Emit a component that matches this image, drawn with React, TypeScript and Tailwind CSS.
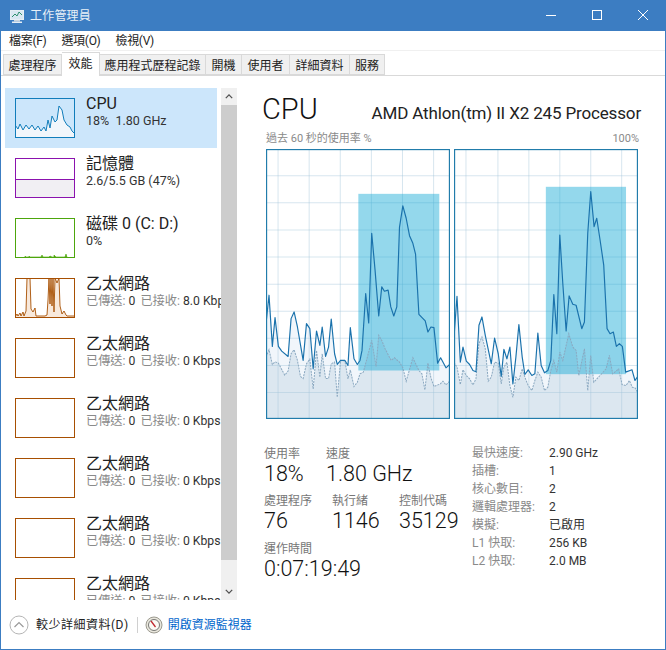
import React from "react";

const s1 = "19,550 28,465 38,618 46,532 56,618 66,632 85,648 94,535 103,515 113,560 130,660 140,550 150,565 160,685 170,572 180,615 187,560 197,648 206,620 214,536 224,640 232,672 242,660 255,660 264,675 271,562 282,655 292,672 300,660 306,630 317,460 326,548 335,280 345,390 356,527 365,440 373,453 384,450 392,500 401,527 410,500 418,262 428,198 438,235 448,287 458,310 466,342 476,522 495,542 503,575 512,560 521,562 532,668 541,652 557,682 568,672";
const d1 = "19,650 28,628 38,672 46,664 56,668 75,704 85,692 94,640 103,628 113,660 122,708 130,714 140,670 150,656 160,745 170,630 180,710 187,640 197,714 206,714 214,670 224,665 232,770 242,660 255,662 264,715 271,688 282,738 292,725 300,700 310,695 335,600 348,678 356,585 365,600 375,625 393,660 403,652 418,665 428,682 438,722 458,652 476,690 485,700 494,748 503,668 512,712 521,738 540,730 548,722 557,733 568,722";
const s2 = "13,590 22,468 32,665 40,620 50,662 60,672 70,690 79,694 88,555 97,530 107,585 125,670 135,593 146,640 155,708 163,627 172,655 181,620 190,730 199,650 208,553 218,650 226,702 236,688 247,705 256,700 265,578 275,675 285,697 295,690 304,660 313,463 322,580 331,285 340,430 350,572 359,467 370,492 380,495 397,565 405,545 415,280 424,155 434,260 442,235 452,300 463,375 473,565 482,580 492,575 501,618 510,610 519,618 529,695 548,688 557,720 565,708";
const d2 = "13,665 22,680 32,732 40,688 50,705 60,715 70,733 79,715 88,610 97,590 107,625 116,722 125,710 135,665 146,668 155,730 163,680 172,665 181,735 190,770 199,710 208,720 218,685 226,710 236,735 247,750 256,720 265,695 275,710 285,750 295,740 304,690 313,660 322,695 331,635 340,660 358,580 370,620 380,630 388,705 405,625 415,750 424,645 433,725 452,705 470,685 480,645 490,700 508,685 518,732 530,735 540,720 549,740 557,742 565,755";

function Chart({ left, right, vs, solid, dash, rect, cls }: { left: number; right: number; vs: number[]; solid: string; dash: string; rect: number[]; cls: string }) {
  const hs = [108, 189, 270, 351, 432, 513, 594, 675, 756];
  const top = 28, bottom = 835;
  return (
    <svg viewBox={`${left} ${top} ${right - left} ${bottom - top}`} preserveAspectRatio="none" className={cls}>
      <rect x={left} y={top} width={right - left} height={bottom - top} fill="#fff" />
      <polygon points={`${left},${bottom} ${solid} ${right},${bottom}`} fill="#f1f6fb" />
      <polygon points={`${left},${bottom} ${dash} ${right},${bottom}`} fill="#dce7f0" />
      {vs.map((x) => (
        <line key={x} x1={x} x2={x} y1={top} y2={bottom} stroke="#9fc3d9" strokeOpacity="0.42" strokeWidth="3" />
      ))}
      {hs.map((y) => (
        <line key={y} x1={left} x2={right} y1={y} y2={y} stroke="#9fc3d9" strokeOpacity="0.42" strokeWidth="3" />
      ))}
      <rect x={rect[0]} y={rect[1]} width={rect[2] - rect[0]} height={rect[3] - rect[1]} fill="#12a8d4" fillOpacity="0.45" />
      <polyline points={dash} fill="none" stroke="#8aa8c0" strokeWidth="3" strokeDasharray="6 3" />
      <polyline points={solid} fill="none" stroke="#1a72ac" strokeWidth="3.5" strokeLinejoin="round" />
      <rect x={left + 1.5} y={top + 1.5} width={right - left - 3} height={bottom - top - 3} fill="none" stroke="#217cab" strokeWidth="4" />
    </svg>
  );
}

function MiniCpu() {
  const pts = "0,27 3,31 5,26 8,32 11,27 14,31 17,27 20,32 23,28 26,33 29,29 31,33 33,22 35,30 37,18 40,24 42,22 44,8 47,12 49,22 52,27 55,29 57,33 60,36";
  return (
    <svg viewBox="0 0 60 40" className="w-[60px] h-[40px] shrink-0">
      <polygon points={`0,40 ${pts} 60,40`} fill="#f1f6fb" />
      <polyline points={pts} fill="none" stroke="#117dbb" strokeWidth="1" />
      <rect x=".5" y=".5" width="59" height="39" fill="none" stroke="#117dbb" />
    </svg>
  );
}
function MiniMem() {
  return (
    <svg viewBox="0 0 60 40" className="w-[60px] h-[40px] shrink-0">
      <rect x="0" y="21" width="60" height="19" fill="#f1eff3" />
      <line x1="0" x2="60" y1="21.5" y2="21.5" stroke="#8b12ae" />
      <rect x=".5" y=".5" width="59" height="39" fill="none" stroke="#8b12ae" />
    </svg>
  );
}
function MiniDisk() {
  return (
    <svg viewBox="0 0 60 40" className="w-[60px] h-[40px] shrink-0">
      <polyline points="10,39 10,38 11,39 14,39 14,38 15,39 26,39 27,37 28,39 34,39 35,38 37,39 39,39 39,37 40,38 41,39 50,39 51,36 52,39" fill="#4da60c" stroke="#4da60c" strokeWidth=".6" />
      <rect x=".5" y=".5" width="59" height="39" fill="none" stroke="#4da60c" />
    </svg>
  );
}
function MiniNet({ active }: { active?: boolean }) {
  const pts = "0,39 2,36 3,38 5,35 6,38 8,34 9,38 11,33 12,0 13,0 15,0 16,31 18,34 20,30 21,38 23,38 30,38 32,37 33,22 34,0 35,26 36,0 37,28 38,0 39,34 40,0 42,5 44,0 45,28 47,36 49,33 51,37 52,38 60,38";
  return (
    <svg viewBox="0 0 60 40" className="w-[60px] h-[40px] shrink-0">
      {active && <polygon points={`0,40 ${pts} 60,40`} fill="#f8e9dc" />}
      {active && <polyline points={pts} fill="none" stroke="#a74f01" strokeWidth=".9" />}
      <rect x=".5" y=".5" width="59" height="39" fill="none" stroke="#a74f01" />
    </svg>
  );
}

function NetSub({ v }: { v: string }) {
  return (
    <div className="text-[12.2px] leading-[16px] whitespace-nowrap text-[#333]">
      <span className="text-[#8a8a8a]">已傳送:</span> 0 <span className="text-[#8a8a8a] ml-[2px]">已接收:</span> {v}
    </div>
  );
}

function Item({ icon, title, sub, selected }: { icon: React.ReactNode; title: string; sub: React.ReactNode; selected?: boolean }) {
  return (
    <div className={`w-[212px] h-[60px] shrink-0 flex items-center gap-[11px] pl-[10px] ${selected ? "bg-[#cce6fb]" : ""}`}>
      {icon}
      <div className="pb-[13px] whitespace-nowrap">
        <div className="text-[16px] leading-[19px] text-[#222]">{title}</div>
        {sub}
      </div>
    </div>
  );
}

function Stat({ label, value, cls }: { label: string; value: string; cls: string }) {
  return (
    <div className={cls}>
      <div className="text-[12px] leading-[15px] text-[#777]">{label}</div>
      <div className="text-[21.5px] leading-[24px] font-light text-[#111]">{value}</div>
    </div>
  );
}

const Sub = ({ t }: { t: string }) => <div className="text-[12.5px] leading-[16px] text-[#333] whitespace-pre">{t}</div>;

const specs = [
  ["最快速度:", "2.90 GHz"],
  ["插槽:", "1"],
  ["核心數目:", "2"],
  ["邏輯處理器:", "2"],
  ["模擬:", "已啟用"],
  ["L1 快取:", "256 KB"],
  ["L2 快取:", "2.0 MB"],
];

const tabs = [
  ["處理程序", "w-[59px]"],
  ["應用程式歷程記錄", "w-[106px]"],
  ["開機", "w-[36px]"],
  ["使用者", "w-[48px]"],
  ["詳細資料", "w-[60px]"],
  ["服務", "w-[35px]"],
];

function Tab({ t, w }: { t: string; w: string }) {
  return (
    <div className={`${w} h-[21px] bg-[#f0f0f0] border border-[#d9d9d9] border-l-0 flex items-center justify-center pt-[3px] text-[12px] text-[#222] whitespace-nowrap`}>{t}</div>
  );
}

export default function App() {
  return (
    <div
      className="w-[666px] h-[650px] flex flex-col overflow-hidden bg-white border-x border-b border-[#3c7dc2] text-[#222]"
      style={{ fontFamily: 'Roboto,"Noto Sans CJK TC",sans-serif' }}
    >
      {/* title bar */}
      <div className="h-[31px] shrink-0 -mx-px bg-[#3c7dc2] flex items-center pl-[9px] text-white">
        <svg viewBox="0 0 16 16" className="w-[16px] h-[16px]">
          <rect x="1.5" y="2.5" width="13" height="9" fill="#d9e7f2" stroke="#e6eef5" />
          <polyline points="3,9 6,6 8,8 10,4 13,7" fill="none" stroke="#2f8f6f" strokeWidth="1" />
          <rect x="5" y="12" width="6" height="1.5" fill="#c9d5df" />
          <rect x="3" y="13.5" width="10" height="1.5" fill="#e6eef5" />
        </svg>
        <span className="ml-[5px] pt-[1px] text-[12px] tracking-[0.2px] text-[#e8f0f8]">工作管理員</span>
        <div className="ml-auto flex items-center">
          <svg viewBox="0 0 46 31" className="w-[46px] h-[31px]"><line x1="18" x2="28" y1="15.5" y2="15.5" stroke="#fff" /></svg>
          <svg viewBox="0 0 46 31" className="w-[46px] h-[31px]"><rect x="18.5" y="10.5" width="9" height="9" fill="none" stroke="#fff" /></svg>
          <svg viewBox="0 0 46 31" className="w-[46px] h-[31px]"><path d="M18 10 L28 20 M28 10 L18 20" stroke="#fff" fill="none" /></svg>
        </div>
      </div>

      {/* menu */}
      <div className="h-[20px] shrink-0 flex items-center pl-[8px] gap-[15px] text-[12px] tracking-[-0.3px] border-b border-[#f0f0f0] text-[#222]">
        <span>檔案(F)</span>
        <span>選項(O)</span>
        <span>檢視(V)</span>
      </div>

      {/* tabs */}
      <div className="h-[25px] shrink-0 flex items-end pl-[2px] border-b border-[#d9d9d9]">
        <Tab t={tabs[0][0]} w={`${tabs[0][1]} border-l!`} />
        <div className="relative w-[38px] h-[24px] bg-white border border-[#d9d9d9] border-l-0 border-b-0 flex items-center justify-center text-[12px] -mb-px pb-[1px]">效能</div>
        {tabs.slice(1).map(([t, w]) => (
          <Tab key={t} t={t} w={w} />
        ))}
      </div>

      {/* content */}
      <div className="flex-1 flex min-h-0">
        {/* sidebar */}
        <div className="w-[236px] shrink-0 flex pt-[12px] pl-[4px] h-[524px]">
          <div className="w-[216px] overflow-hidden flex flex-col">
            <Item selected icon={<MiniCpu />} title="CPU" sub={<Sub t="18%  1.80 GHz" />} />
            <Item icon={<MiniMem />} title="記憶體" sub={<Sub t="2.6/5.5 GB (47%)" />} />
            <Item icon={<MiniDisk />} title="磁碟 0 (C: D:)" sub={<Sub t="0%" />} />
            <Item icon={<MiniNet active />} title="乙太網路" sub={<NetSub v="8.0 Kbps" />} />
            <Item icon={<MiniNet />} title="乙太網路" sub={<NetSub v="0 Kbps" />} />
            <Item icon={<MiniNet />} title="乙太網路" sub={<NetSub v="0 Kbps" />} />
            <Item icon={<MiniNet />} title="乙太網路" sub={<NetSub v="0 Kbps" />} />
            <Item icon={<MiniNet />} title="乙太網路" sub={<NetSub v="0 Kbps" />} />
            <Item icon={<MiniNet />} title="乙太網路" sub={<NetSub v="0 Kbps" />} />
          </div>
          <div className="w-[16px] bg-[#f0f0f0] flex flex-col shrink-0">
            <div className="h-[17px] flex items-center justify-center">
              <svg viewBox="0 0 10 6" className="w-[8px] h-[5px]"><path d="M1 5 L5 1 L9 5" fill="none" stroke="#505050" strokeWidth="1.6" /></svg>
            </div>
            <div className="h-[455px] bg-[#cdcdcd]" />
            <div className="flex-1 flex items-end justify-center pb-[6px]">
              <svg viewBox="0 0 10 6" className="w-[8px] h-[5px]"><path d="M1 1 L5 5 L9 1" fill="none" stroke="#505050" strokeWidth="1.6" /></svg>
            </div>
          </div>
        </div>

        {/* main */}
        <div className="flex-1 min-w-0 pl-[26px] pt-[12px]">
          <div className="w-[378px] flex items-end justify-between h-[38px]">
            <span className="text-[29px] leading-[34px] font-light text-[#111] -ml-px">CPU</span>
            <span className="text-[17px] tracking-[-0.15px] leading-[24px] pb-[1px] whitespace-nowrap text-[#222]">AMD Athlon(tm) II X2 245 Processor</span>
          </div>
          <div className="w-[373px] ml-[3px] flex justify-between text-[11px] leading-[15px] mt-[5px] text-[#8a8a8a]">
            <span>過去 60 秒的使用率 %</span>
            <span>100%</span>
          </div>
          <div className="flex ml-[3px] gap-[4px] mt-[3px]">
            <Chart cls="w-[184px] h-[270px] block" left={19} right={569} vs={[55, 148, 241, 334, 427, 520]} solid={s1} dash={d1} rect={[295, 162, 537, 690]} />
            <Chart cls="w-[184px] h-[270px] block" left={13} right={566} vs={[49, 145, 238, 331, 424, 517]} solid={s2} dash={d2} rect={[289, 141, 530, 701]} />
          </div>
          <div className="flex mt-[28px] ml-[1px]">
            <div className="w-[208px]">
              <div className="flex">
                <Stat label="使用率" value="18%" cls="w-[62px]" />
                <Stat label="速度" value="1.80 GHz" cls="" />
              </div>
              <div className="flex mt-[8px]">
                <Stat label="處理程序" value="76" cls="w-[68px]" />
                <Stat label="執行緒" value="1146" cls="w-[67px]" />
                <Stat label="控制代碼" value="35129" cls="" />
              </div>
              <div className="flex mt-[9px]">
                <Stat label="運作時間" value="0:07:19:49" cls="" />
              </div>
            </div>
            <div className="flex flex-col -mt-[3px] text-[12px] leading-[18px]">
              {specs.map(([a, b]) => (
                <div key={a} className="flex">
                  <span className="w-[77px] text-[#8a8a8a]">{a}</span>
                  <span className="text-[#333]">{b}</span>
                </div>
              ))}
            </div>
          </div>
        </div>
      </div>

      {/* footer */}
      <div className="h-[49px] shrink-0 flex items-center pl-[8px] text-[12px]">
        <svg viewBox="0 0 20 20" className="w-[20px] h-[20px]">
          <circle cx="10" cy="10" r="9" fill="#fff" stroke="#b5b5b5" />
          <path d="M5.5 12 L10 7.5 L14.5 12" fill="none" stroke="#9a9a9a" strokeWidth="1.2" />
        </svg>
        <span className="ml-[7px] pt-[1px] tracking-[0.5px] text-[#222]">較少詳細資料(D)</span>
        <div className="w-px h-[16px] bg-[#d0d0d0] ml-[8px]" />
        <svg viewBox="0 0 18 18" className="w-[18px] h-[18px] ml-[7px]">
          <circle cx="9" cy="9" r="8" fill="#e8e6dc" stroke="#9c9a90" />
          <circle cx="9" cy="9" r="5.5" fill="#fbfaf4" stroke="#444" strokeWidth=".7" />
          <line x1="6" x2="10.5" y1="5" y2="11" stroke="#c0272d" strokeWidth="1.3" />
        </svg>
        <span className="ml-[5px] pt-[1px] text-[#0066cc]">開啟資源監視器</span>
      </div>
    </div>
  );
}
